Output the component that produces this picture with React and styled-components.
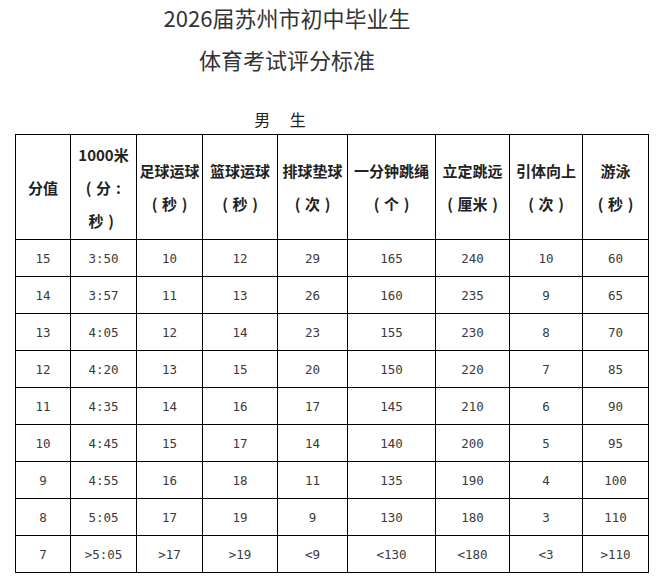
import React from "react";
import styled, { createGlobalStyle } from "styled-components";

const GlobalStyle = createGlobalStyle`
  html, body { margin: 0; padding: 0; background: #fff; }
  body {
    font-family: "Noto Sans CJK SC", "Noto Sans", sans-serif;
  }
`;

const Page = styled.div`
  width: 662px;
  height: 579px;
  overflow: hidden;
  padding-left: 15px;
  box-sizing: border-box;
`;

const TitleBlock = styled.div`
  width: 544px;
  padding-top: 2px;
  display: flex;
  flex-direction: column;
  align-items: center;
  gap: 12px;
`;

const TitleLine = styled.div`
  font-family: "Noto Sans CJK SC", sans-serif;
  font-weight: 400;
  font-size: 22px;
  line-height: 30px;
  color: #333;
  white-space: nowrap;
`;

const Subtitle = styled.div`
  width: 530px;
  margin-top: 35px;
  text-align: center;
  font-family: "Noto Sans CJK SC", sans-serif;
  font-size: 16px;
  line-height: 20px;
  color: #222;
  white-space: pre;
`;

const Table = styled.table`
  margin-top: 5px;
  border-collapse: collapse;
  table-layout: fixed;
  width: 634px;
`;

const Col = styled.col`
  width: ${(p) => p.$w}px;
`;

const HeadCell = styled.th`
  border: 1px solid #000;
  height: 104px;
  padding: 0;
  text-align: center;
  vertical-align: middle;
  font-family: "Noto Sans CJK SC", sans-serif;
  font-weight: 600;
  font-size: 15px;
  line-height: 33px;
  color: #222;
  white-space: nowrap;
`;

/* full-width punctuation drawn in a 1em box, ink centred as in SimSun */
const Punct = styled.span`
  display: inline-block;
  width: 1em;
  text-align: center;
`;

const Cell = styled.td`
  border: 1px solid #000;
  height: 36px;
  padding: 0;
  text-align: center;
  vertical-align: middle;
  font-family: "DejaVu Sans Mono", "Liberation Mono", monospace;
  font-size: 12.5px;
  color: #3a3a3a;
  white-space: nowrap;
`;

const widths = [55, 66, 66, 75, 70, 88, 74, 73, 66];

const headers = [
  ["分值"],
  ["1000米", "（分：", "秒）"],
  ["足球运球", "（秒）"],
  ["篮球运球", "（秒）"],
  ["排球垫球", "（次）"],
  ["一分钟跳绳", "（个）"],
  ["立定跳远", "（厘米）"],
  ["引体向上", "（次）"],
  ["游泳", "（秒）"],
];

const rows = [
  ["15", "3:50", "10", "12", "29", "165", "240", "10", "60"],
  ["14", "3:57", "11", "13", "26", "160", "235", "9", "65"],
  ["13", "4:05", "12", "14", "23", "155", "230", "8", "70"],
  ["12", "4:20", "13", "15", "20", "150", "220", "7", "85"],
  ["11", "4:35", "14", "16", "17", "145", "210", "6", "90"],
  ["10", "4:45", "15", "17", "14", "140", "200", "5", "95"],
  ["9", "4:55", "16", "18", "11", "135", "190", "4", "100"],
  ["8", "5:05", "17", "19", "9", "130", "180", "3", "110"],
  ["7", ">5:05", ">17", ">19", "<9", "<130", "<180", "<3", ">110"],
];

const punctMap = { "（": "(", "）": ")", "：": ":" };

function renderLine(line) {
  const parts = [];
  let buf = "";
  [...line].forEach((ch, i) => {
    if (punctMap[ch]) {
      if (buf) parts.push(buf);
      buf = "";
      parts.push(<Punct key={i}>{punctMap[ch]}</Punct>);
    } else {
      buf += ch;
    }
  });
  if (buf) parts.push(buf);
  return parts;
}

export default function App() {
  return (
    <>
      <GlobalStyle />
      <Page>
        <TitleBlock>
          <TitleLine>2026届苏州市初中毕业生</TitleLine>
          <TitleLine>体育考试评分标准</TitleLine>
        </TitleBlock>
        <Subtitle>男　 生</Subtitle>
        <Table>
          <colgroup>
            {widths.map((w, i) => (
              <Col key={i} $w={w} />
            ))}
          </colgroup>
          <thead>
            <tr>
              {headers.map((lines, i) => (
                <HeadCell key={i}>
                  {lines.map((l, j) => (
                    <React.Fragment key={j}>
                      {j > 0 && <br />}
                      {renderLine(l)}
                    </React.Fragment>
                  ))}
                </HeadCell>
              ))}
            </tr>
          </thead>
          <tbody>
            {rows.map((r, i) => (
              <tr key={i}>
                {r.map((v, j) => (
                  <Cell key={j}>{v}</Cell>
                ))}
              </tr>
            ))}
          </tbody>
        </Table>
      </Page>
    </>
  );
}
